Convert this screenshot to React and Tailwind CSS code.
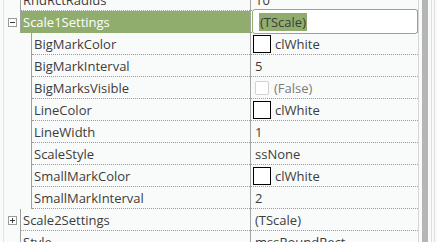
import React from 'react';

const rows = [
  { name: 'RndRctRadius', value: '10', level: 0 },
  { name: 'Scale1Settings', value: '(TScale)', level: 0, expander: 'minus', selected: true },
  { name: 'BigMarkColor', value: 'clWhite', level: 1, swatch: true },
  { name: 'BigMarkInterval', value: '5', level: 1 },
  { name: 'BigMarksVisible', value: '(False)', level: 1, check: true },
  { name: 'LineColor', value: 'clWhite', level: 1, swatch: true },
  { name: 'LineWidth', value: '1', level: 1 },
  { name: 'ScaleStyle', value: 'ssNone', level: 1 },
  { name: 'SmallMarkColor', value: 'clWhite', level: 1, swatch: true },
  { name: 'SmallMarkInterval', value: '2', level: 1 },
  { name: 'Scale2Settings', value: '(TScale)', level: 0, expander: 'plus' },
  { name: 'Style', value: 'mssRoundRect', level: 0 },
];

function Expander({ kind }) {
  return (
    <div className="w-[9px] h-[9px] border border-[#9a9a9a] bg-white relative flex items-center justify-center">
      <div className="w-[5px] h-px bg-[#3c3c3c]" />
      {kind === 'plus' && <div className="absolute w-px h-[5px] bg-[#3c3c3c]" />}
    </div>
  );
}

function Row({ row }) {
  const gutter = row.level === 0 ? 'w-[17px]' : 'w-[28px]';
  return (
    <div className="flex h-[22px]">
      <div className={`${gutter} shrink-0 flex items-center justify-center border-r border-[#a0a0a0]`}>
        {row.expander && <Expander kind={row.expander} />}
      </div>
      <div
        className={`flex-1 flex items-center pl-[2px] pt-[2px] border-b ${
          row.selected ? 'bg-[#91ad6e] border-solid border-[#91ad6e] text-white' : 'border-dotted border-[#9a9a9a]'
        }`}
      >
        {row.name}
      </div>
      <div className="relative w-[168px] shrink-0 flex items-center border-l border-l-[#a4a4a4] border-b border-b-[#9a9a9a] border-dotted [border-left-style:solid] pl-[2px]">
        {row.swatch && (
          <>
            <div className="w-[18px] h-[18px] border border-black bg-white mr-[4px]" />
            <span className="pt-[2px]">{row.value}</span>
          </>
        )}
        {row.check && (
          <>
            <div className="ml-[2px] w-[14px] h-[14px] rounded-[2px] border border-[#d2d2d2] bg-white mr-[5px]" />
            <span className="pt-[2px] text-[#7a7a7a]">{row.value}</span>
          </>
        )}
        {!row.swatch && !row.check && !row.selected && <span className="pl-[2px] pt-[2px]">{row.value}</span>}
        {row.selected && (
          <div className="absolute left-px right-0 top-[-2px] bottom-[-2px] rounded-[3px] border border-[#8db06b] bg-white flex items-center pl-[6px]">
            <span className="h-[18px] leading-[19px] px-[1px] bg-[#91ad6e] text-[#3c3c3c]">{row.value}</span>
          </div>
        )}
      </div>
    </div>
  );
}

export default function App() {
  return (
    <div className="w-[437px] h-[242px] overflow-hidden flex bg-[#f9fbfa] text-[#3c3c3c] text-[13px]" style={{ fontFamily: '"Open Sans", "Noto Sans", sans-serif' }}>
      {/* property grid */}
      <div className="w-[419px] h-full flex border-r border-[#d6d6d6] overflow-hidden">
        <div className="w-[3px] shrink-0" />
        <div className="flex-1 border-l border-[#e2e2e2]">
          <div className="-mt-[11px] flex flex-col">
            {rows.map((r) => (
              <Row key={r.name} row={r} />
            ))}
          </div>
        </div>
      </div>
      {/* scrollbar */}
      <div className="w-[18px] h-full flex pl-[3px]">
        <div className="w-[6px] bg-[#b5b5b5]" />
        <div className="ml-[3px] w-px bg-[#dedede]" />
        <div className="ml-[2px] w-px bg-[#dedede]" />
      </div>
    </div>
  );
}
